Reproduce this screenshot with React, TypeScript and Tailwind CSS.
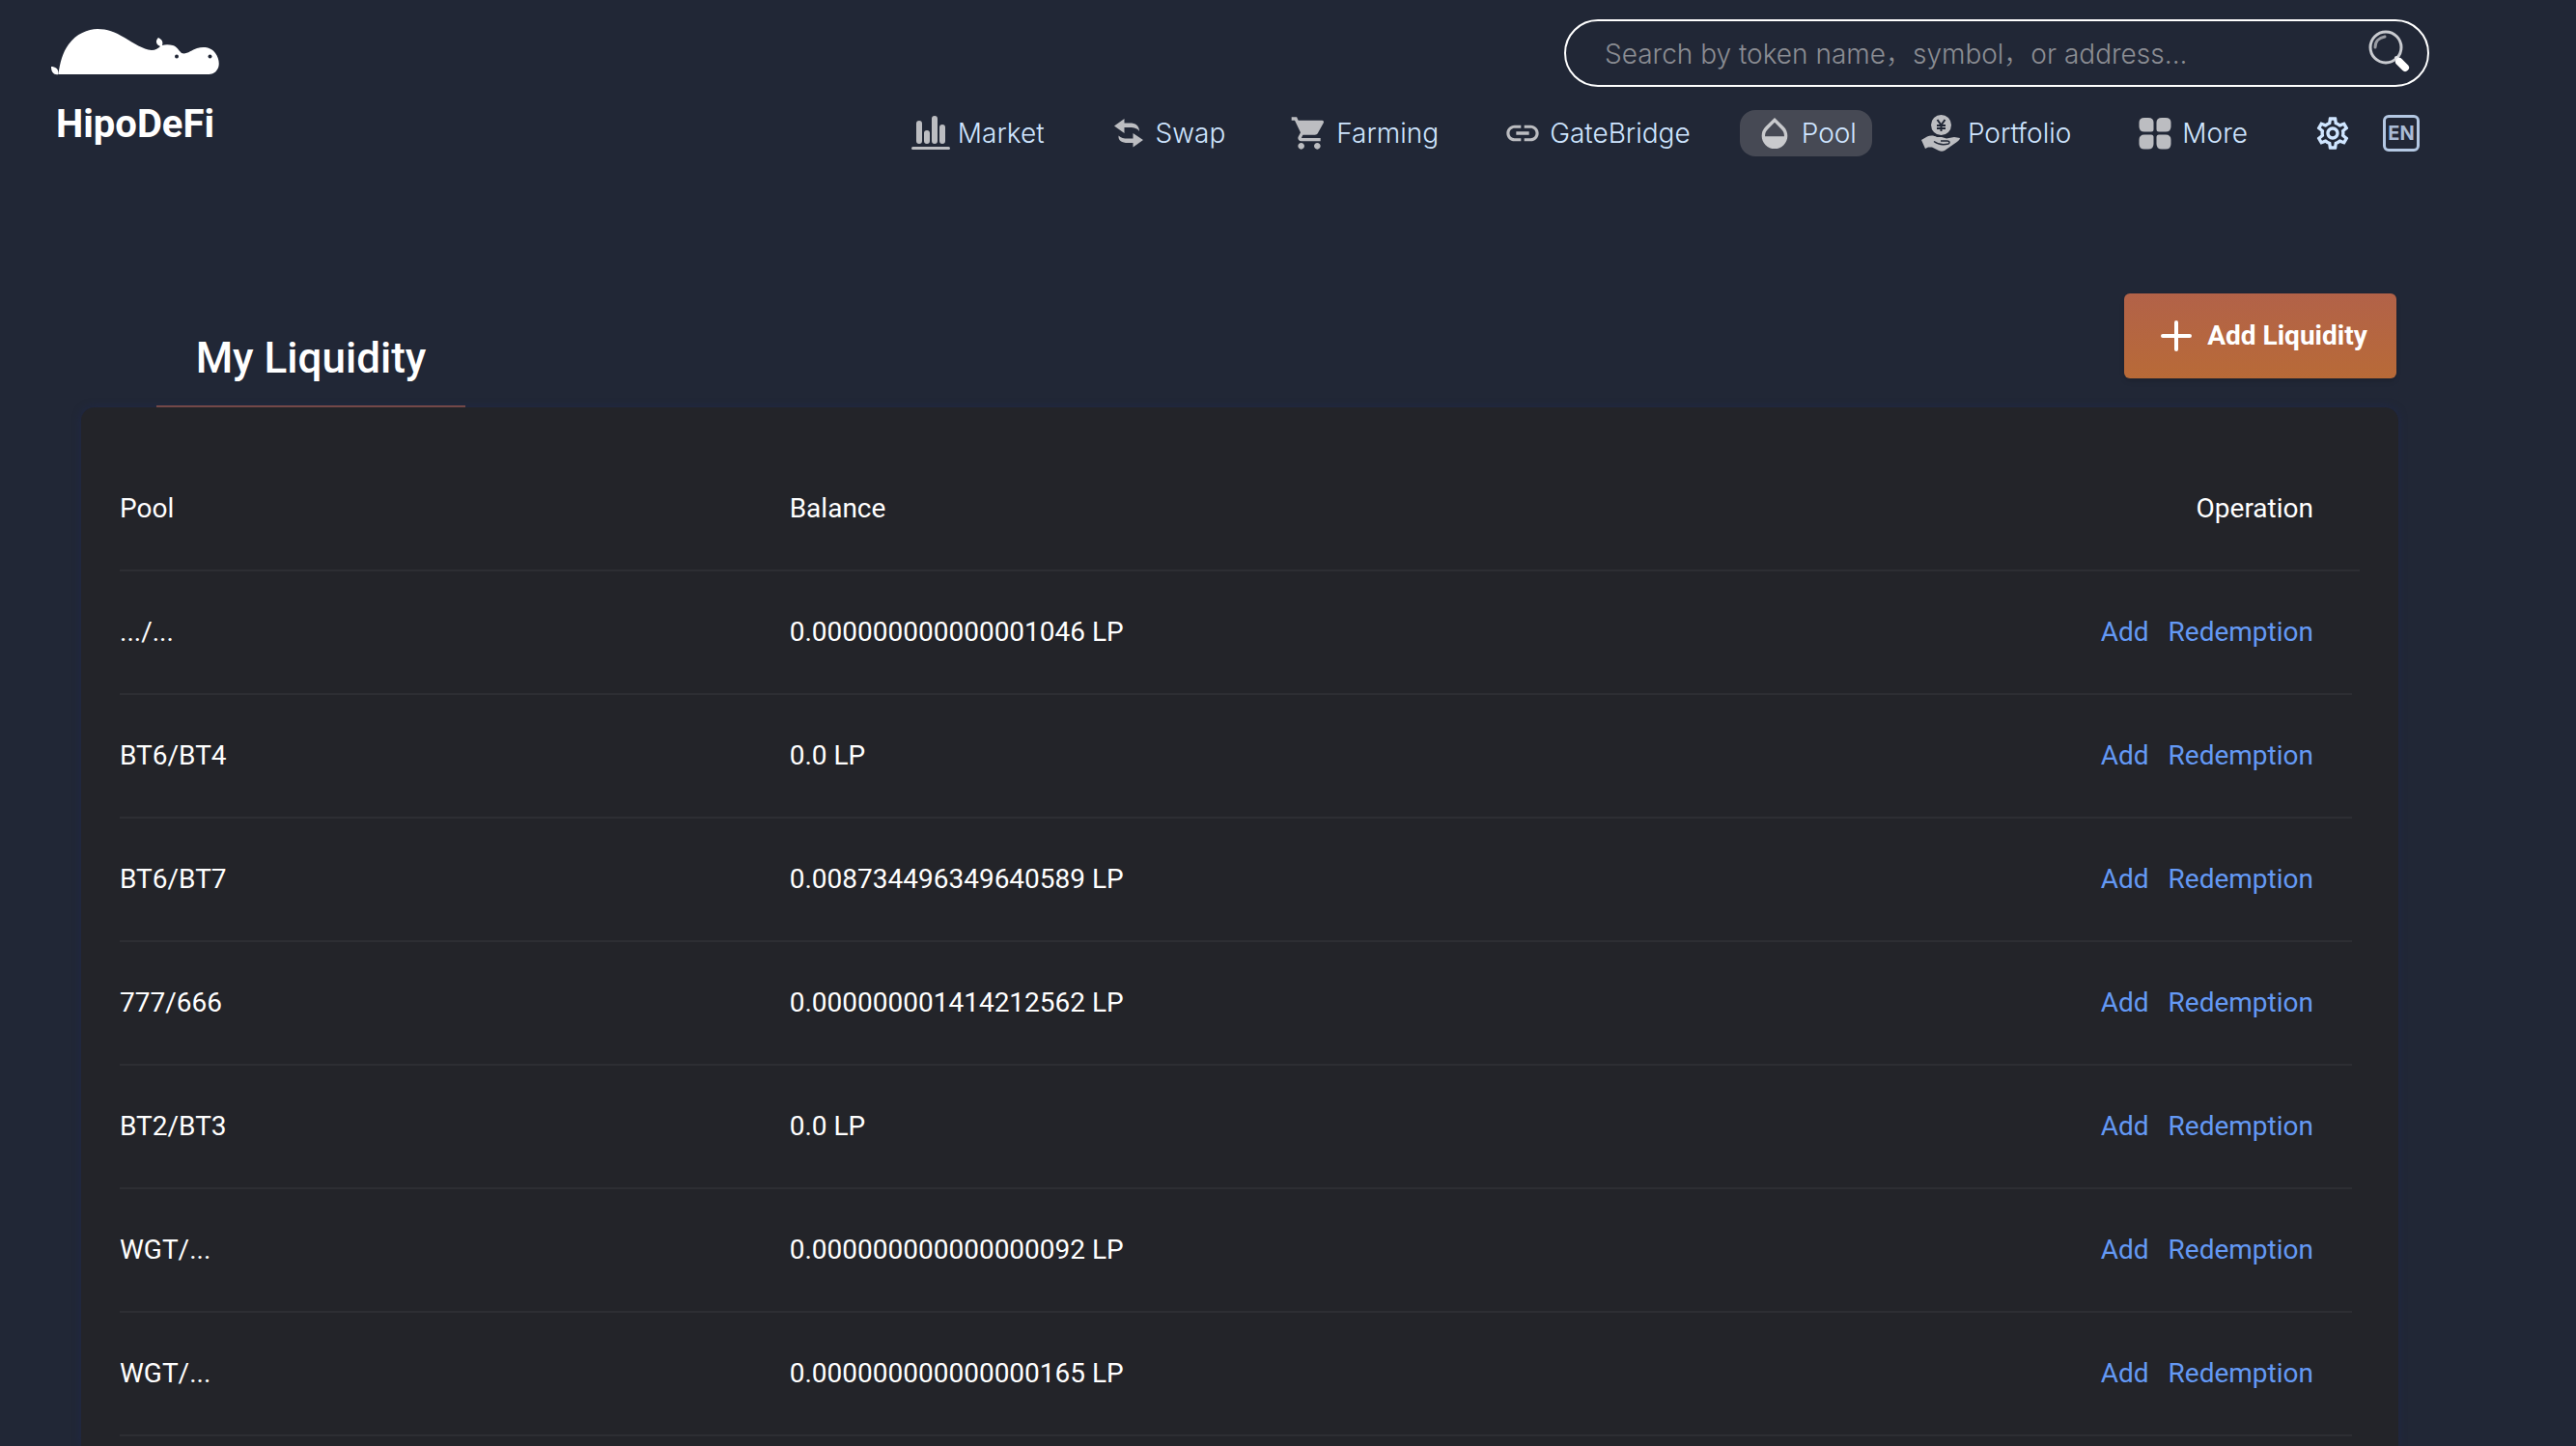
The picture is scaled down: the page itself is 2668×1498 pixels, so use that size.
import type { ReactNode } from "react";
import { MdLink, MdOpacity, MdOutlineSettings, MdShoppingCart } from "react-icons/md";

function HippoLogo() {
  return (
    <svg width="174" height="48" viewBox="0 0 174 48" aria-hidden="true">
      <path
        fill="#fff"
        d="M7.500 47C9 35 12 24 18 16C26 5 38 0 48 0C58 0 66 3 76 9C86 15 95 21 104 22C108 22 111 20 113 18C108 16 108 12 111 9C115 11 116 13 115 17C118 16 122 16 126 17C130 18 132 22 135 25C140 27 145 22 151 20C158 18 166 19 170 25C174 30 175 38 172 42C170 46 166 47 162 47Z"
      />
      <path fill="#fff" d="M0 39C4 39 8 41 7.500 47C3 48 0 45 0 39Z" />
      <circle cx="130" cy="28.500" r="2" fill="#212736" />
      <circle cx="164.500" cy="28.500" r="2" fill="#212736" />
    </svg>
  );
}

function MarketIcon() {
  return (
    <svg width="40" height="40" viewBox="0 0 40 40" fill="none" stroke="currentColor" strokeLinecap="round">
      <path strokeWidth="6" d="M8 10V28M16 20V28M24 5V28M32 14V28" />
      <path strokeWidth="3" d="M1.500 35.500H38.500" />
    </svg>
  );
}

function SwapIcon() {
  return (
    <svg width="40" height="40" viewBox="0 0 40 40" fill="currentColor">
      <path d="M5 12.500L15.500 5V9.500H21C27 9.500 31 12 31 18C29 15 26 14 21 14H15.500V20Z" />
      <path d="M35 27L24.500 34.500V30H19C13 30 9 28 9.500 22.500C12 25 15 25.500 19 25.500H24.500V20Z" />
    </svg>
  );
}

function PortfolioIcon() {
  return (
    <svg width="40" height="40" viewBox="0 0 40 40" fill="currentColor">
      <circle cx="20.500" cy="11.500" r="10.500" />
      <path stroke="#212736" strokeWidth="2" fill="none" d="M16.500 6L20.500 11.500L24.500 6M20.500 11.500V18M16 12H25M16 15H25" />
      <path d="M0 27L6 23.500C9 22 13 22 16 24H21L26 25.500L34 24L40 25C40 27 37 29 34 31L24 38C22 39 20 39 18 38L11 34.500H7L4 36Z" />
      <path d="M13 28.500C17 31.500 22 32.500 28 31C30 30 29 28 27 28L20 28" stroke="#212736" strokeWidth="1.500" fill="none" />
    </svg>
  );
}

function MoreIcon() {
  return (
    <svg width="40" height="40" viewBox="0 0 40 40" fill="currentColor">
      <path d="M9 4H13Q18.500 4 18.500 9V16Q18.500 18.500 16 18.500H9Q3.500 18.500 3.500 13V9Q3.500 4 9 4Z" />
      <path d="M27 4H31Q36.500 4 36.500 9V13Q36.500 18.500 31 18.500H24Q21.500 18.500 21.500 16V9Q21.500 4 27 4Z" />
      <path d="M9 21.500H16Q18.500 21.500 18.500 24V31Q18.500 36.500 13 36.500H9Q3.500 36.500 3.500 31V27Q3.500 21.500 9 21.500Z" />
      <path d="M24 21.500H31Q36.500 21.500 36.500 27V31Q36.500 36.500 31 36.500H27Q21.500 36.500 21.500 31V24Q21.500 21.500 24 21.500Z" />
    </svg>
  );
}

function SearchIcon() {
  return (
    <svg width="48" height="48" viewBox="0 0 48 48" fill="none" strokeLinecap="round">
      <circle cx="21" cy="18" r="16" stroke="#c9cbd0" strokeWidth="3" />
      <path d="M10 18C10 12 14 8 20 7" stroke="#9a9ca3" strokeWidth="3" />
      <path d="M32 29L35 32" stroke="#e4e5e8" strokeWidth="4" />
      <path d="M35 33L41 39" stroke="#fff" strokeWidth="8" />
    </svg>
  );
}

type Item = { label: string; icon: ReactNode; active?: boolean };

const items: Item[] = [
  { label: "Market", icon: <MarketIcon /> },
  { label: "Swap", icon: <SwapIcon /> },
  { label: "Farming", icon: <MdShoppingCart size={40} /> },
  { label: "GateBridge", icon: <MdLink size={40} /> },
  { label: "Pool", icon: <MdOpacity size={40} />, active: true },
  { label: "Portfolio", icon: <PortfolioIcon /> },
  { label: "More", icon: <MoreIcon /> },
];

const pools = [
  { pool: ".../...", balance: "0.000000000000001046 LP" },
  { pool: "BT6/BT4", balance: "0.0 LP" },
  { pool: "BT6/BT7", balance: "0.008734496349640589 LP" },
  { pool: "777/666", balance: "0.000000001414212562 LP" },
  { pool: "BT2/BT3", balance: "0.0 LP" },
  { pool: "WGT/...", balance: "0.000000000000000092 LP" },
  { pool: "WGT/...", balance: "0.000000000000000165 LP" },
];

export default function App() {
  return (
    <div className="flex min-h-screen flex-col bg-[#212736] font-[Roboto,sans-serif] text-[28px] text-white">
      <header className="flex items-start justify-between pr-[152px] pl-[53px]">
        <a href="#home" className="flex flex-col items-center pt-[30px]">
          <HippoLogo />
          <span className="mt-[26px] text-[40px] leading-[50px] font-bold">HipoDeFi</span>
        </a>
        <div className="flex flex-col items-end gap-6 pt-5 font-[Inter,'Noto_Sans_CJK_SC',sans-serif] font-light">
          <form className="flex h-[70px] w-[896px] items-center rounded-[35px] border-2 border-white pr-4 pl-10">
            <input
              type="search"
              aria-label="Search tokens"
              placeholder="Search by token name，symbol，or address..."
              className="min-w-0 flex-1 bg-transparent pt-[2px] outline-none placeholder:text-[#8b8d93]"
            />
            <button type="button" aria-label="Search">
              <SearchIcon />
            </button>
          </form>
          <nav className="flex items-center gap-8 pr-[10px] text-[#cfe5ff]">
            <div className="flex items-center gap-[35px]">
              {items.map((item) => (
                <a
                  key={item.label}
                  href={"#" + item.label.toLowerCase()}
                  className={
                    item.active
                      ? "flex h-12 items-center gap-2 rounded-[16px] bg-[#464954] px-4"
                      : "flex h-12 items-center gap-2 px-4"
                  }
                >
                  <span className={item.active ? "text-[#c9cacd]" : "text-[#bcbdc1]"}>{item.icon}</span>
                  {item.label}
                </a>
              ))}
            </div>
            <div className="flex items-center gap-8 pl-5">
              <button type="button" aria-label="Settings">
                <MdOutlineSettings size={40} />
              </button>
              <button
                type="button"
                className="h-[38px] w-[38px] rounded-md border-3 border-[#b4c8e3] text-center text-[20px] leading-8 font-bold text-[#a9bbd5]"
              >
                EN
              </button>
            </div>
          </nav>
        </div>
      </header>

      <main className="mt-[142px] mr-[184px] ml-[84px] flex flex-1 flex-col">
        <div className="flex items-start justify-between">
          <h1 className="ml-[78px] h-[118px] w-[320px] border-b-2 border-[#b1604a] pt-[41px] text-center text-[44px] leading-[52px] font-medium">
            My Liquidity
          </h1>
          <button
            type="button"
            className="mr-[2px] flex h-[88px] w-[282px] items-center justify-center gap-4 rounded-md bg-linear-to-b from-[#b26248] to-[#b86a37] pl-2 font-bold shadow-md"
          >
            <svg width="32" height="32" viewBox="0 0 32 32" stroke="#fff" strokeWidth="4" strokeLinecap="round">
              <path d="M2 16H30M16 2V30" />
            </svg>
            Add Liquidity
          </button>
        </div>
        <section className="flex-1 rounded-t-[14px] bg-[#232429] px-10 pt-[42px] shadow-[0_0_8px_#1f2848]">
          <table className="w-full table-fixed border-separate border-spacing-0">
            <thead>
              <tr className="h-32 text-left">
                <th scope="col" className="w-[29.9%] border-b-2 border-[#2d2e33] font-normal">Pool</th>
                <th scope="col" className="border-b-2 border-[#2d2e33] font-normal">Balance</th>
                <th scope="col" className="border-b-2 border-[#2d2e33] pr-10 text-right font-normal">Operation</th>
                <td className="w-2 border-b-2 border-[#2d2e33]" />
              </tr>
            </thead>
            <tbody>
              {pools.map((row, index) => (
                <tr key={index} className="h-32">
                  <td className="border-b-2 border-[#2d2e33]">{row.pool}</td>
                  <td className="border-b-2 border-[#2d2e33]">{row.balance}</td>
                  <td className="border-b-2 border-[#2d2e33] pr-10">
                    <div className="flex justify-end gap-5 text-[#6499f4]">
                      <a href="#add">Add</a>
                      <a href="#redemption">Redemption</a>
                    </div>
                  </td>
                  <td />
                </tr>
              ))}
            </tbody>
          </table>
        </section>
      </main>
    </div>
  );
}
